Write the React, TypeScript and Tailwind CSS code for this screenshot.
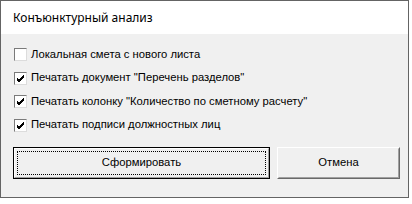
import React from "react"

const options = [
  { label: "Локальная смета с нового листа", checked: false },
  { label: "Печатать документ \"Перечень разделов\"", checked: true },
  { label: "Печатать колонку \"Количество по сметному расчету\"", checked: true },
  { label: "Печатать подписи должностных лиц", checked: true },
]

function Checkbox({ checked }: { checked: boolean }) {
  return (
    <div className="w-[13px] h-[13px] shrink-0 border border-t-[#7a7a7a] border-l-[#7a7a7a] border-b-[#dcdcdc] border-r-[#dcdcdc] bg-white flex items-center justify-center">
      {checked && (
        <svg width="9" height="9" viewBox="0 0 9 9">
          <path d="M1 4 L3 6 L8 1 M1 5 L3 7 L8 2 M1 6 L3 8 L8 3" stroke="#000" strokeWidth="1" fill="none" shapeRendering="crispEdges" />
        </svg>
      )}
    </div>
  )
}

export default function App() {
  return (
    <div className="w-[412px] h-[204px] bg-white" style={{ fontFamily: "'Liberation Sans', Arial, sans-serif" }}>
      <div className="w-[409px] h-[198px] border border-[#646464] bg-[#f0f0f0] flex flex-col">
        <div className="h-[33px] bg-white pl-[12px] flex items-center text-[12px] text-black" style={{ fontFamily: "'Noto Sans', sans-serif" }}>
          Конъюнктурный анализ
        </div>
        <div className="flex flex-col pl-[13px] pt-[14px] gap-[10.5px]">
          {options.map((o) => (
            <div key={o.label} className="flex items-center h-[13px] gap-[4px]">
              <Checkbox checked={o.checked} />
              <span className="text-[11.25px] text-black leading-none whitespace-nowrap">{o.label}</span>
            </div>
          ))}
        </div>
        <div className="flex pl-[12px] pt-[15px] gap-[7px]">
          <button className="w-[257px] h-[32px] border border-black bg-[#f0f0f0] p-0">
            <div className="w-full h-full border border-t-white border-l-white border-b-[#a0a0a0] border-r-[#a0a0a0] p-[2px]">
              <div className="w-full h-full border border-dotted border-black flex items-center justify-center text-[11.25px] text-black">
                Сформировать
              </div>
            </div>
          </button>
          <button className="w-[123px] h-[32px] border border-t-white border-l-white border-b-[#696969] border-r-[#696969] bg-[#f0f0f0] p-0">
            <div className="w-full h-full border border-t-[#f0f0f0] border-l-[#f0f0f0] border-b-[#a0a0a0] border-r-[#a0a0a0] flex items-center justify-center text-[11.25px] text-black">
              Отмена
            </div>
          </button>
        </div>
      </div>
    </div>
  )
}
